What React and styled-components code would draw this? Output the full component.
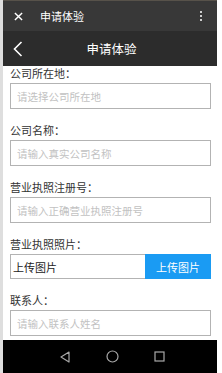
import React from "react";
import styled, { createGlobalStyle } from "styled-components";

const GlobalStyle = createGlobalStyle`
  html, body {
    margin: 0;
    padding: 0;
    background: #ffffff;
    font-family: "Noto Sans CJK SC", "Noto Sans", sans-serif;
  }
`;

const fields = [
  { label: "公司所在地：", placeholder: "请选择公司所在地" },
  { label: "公司名称：", placeholder: "请输入真实公司名称" },
  { label: "营业执照注册号：", placeholder: "请输入正确营业执照注册号" },
  { label: "营业执照照片：", upload: true },
  { label: "联系人：", placeholder: "请输入联系人姓名" },
];

export default function App() {
  return (
    <Page>
      <GlobalStyle />
      <Phone>
        <TopBar>
          <CloseIcon viewBox="0 0 10 10">
            <path d="M1 1 L9 9 M9 1 L1 9" />
          </CloseIcon>
          <TopTitle>申请体验</TopTitle>
          <Dots>
            <span />
            <span />
            <span />
          </Dots>
        </TopBar>
        <NavBar>
          <BackIcon viewBox="0 0 10 16">
            <path d="M8.5 1 L1.5 8 L8.5 15" />
          </BackIcon>
          <NavTitle>申请体验</NavTitle>
        </NavBar>
        <Content>
          {fields.map((f) => (
            <Field key={f.label}>
              <Label>{f.label}</Label>
              {f.upload ? (
                <UploadRow>
                  <UploadText>上传图片</UploadText>
                  <UploadButton>上传图片</UploadButton>
                </UploadRow>
              ) : (
                <Input placeholder={f.placeholder} />
              )}
            </Field>
          ))}
        </Content>
        <SystemBar>
          <svg width="12" height="12" viewBox="0 0 12 12">
            <path d="M10 1 L2 6 L10 11 Z" fill="none" stroke="#a8a8a8" strokeWidth="1.2" strokeLinejoin="round" />
          </svg>
          <svg width="13" height="13" viewBox="0 0 13 13">
            <circle cx="6.5" cy="6.5" r="5.5" fill="none" stroke="#a8a8a8" strokeWidth="1.2" />
          </svg>
          <svg width="11" height="11" viewBox="0 0 11 11">
            <rect x="1" y="1" width="9" height="9" fill="none" stroke="#a8a8a8" strokeWidth="1.2" />
          </svg>
        </SystemBar>
      </Phone>
    </Page>
  );
}

const Page = styled.div`
  width: 222px;
  height: 373px;
  display: flex;
  border-left: 3px solid #dedede;
  box-sizing: border-box;
  background: #ffffff;
`;

const Phone = styled.div`
  width: 214px;
  height: 373px;
  display: flex;
  flex-direction: column;
  background: #ffffff;
  overflow: hidden;
`;

const TopBar = styled.div`
  height: 31px;
  flex-shrink: 0;
  display: flex;
  align-items: center;
  padding: 0 0 0 11px;
  background: #383838;
  border-top: 1px solid #57524a;
  box-sizing: border-box;
`;

const CloseIcon = styled.svg`
  width: 9px;
  height: 9px;
  fill: none;
  stroke: #ffffff;
  stroke-width: 1.6;
  margin-right: 17px;
`;

const TopTitle = styled.div`
  flex: 1;
  color: #ffffff;
  font-size: 11px;
  line-height: 14px;
`;

const Dots = styled.div`
  width: 22px;
  display: flex;
  flex-direction: column;
  align-items: center;
  gap: 2px;
  margin-right: 5px;

  span {
    width: 2px;
    height: 2px;
    background: #ffffff;
    border-radius: 1px;
  }
`;

const NavBar = styled.div`
  height: 35px;
  flex-shrink: 0;
  display: flex;
  align-items: center;
  padding-left: 10px;
  background: #2c2c2c;
`;

const BackIcon = styled.svg`
  width: 10px;
  height: 16px;
  fill: none;
  stroke: #ffffff;
  stroke-width: 1.6;
`;

const NavTitle = styled.div`
  flex: 1;
  text-align: center;
  color: #ffffff;
  font-size: 12.5px;
  line-height: 16px;
  margin-right: 17px;
`;

const Content = styled.div`
  flex: 1;
  overflow: hidden;
  padding: 0 6px 0 7px;
`;

const Field = styled.div`
  display: flex;
  flex-direction: column;
  margin-bottom: 14px;
`;

const Label = styled.div`
  font-size: 11px;
  line-height: 14px;
  color: #333333;
  margin-bottom: 3px;
`;

const Input = styled.input`
  height: 26px;
  box-sizing: border-box;
  width: 100%;
  border: 1px solid #b3b3b3;
  border-radius: 0;
  padding: 0 6px;
  font-family: "Noto Sans CJK SC", "Noto Sans", sans-serif;
  font-size: 10.5px;
  color: #333333;
  outline: none;
  background: #ffffff;

  &::placeholder {
    color: #c2c2c2;
  }
`;

const UploadRow = styled.div`
  display: flex;
  height: 25px;
`;

const UploadText = styled.div`
  flex: 1;
  display: flex;
  align-items: center;
  padding-left: 2px;
  border: 1px solid #b3b3b3;
  border-right: none;
  font-size: 11px;
  color: #222222;
`;

const UploadButton = styled.div`
  width: 66px;
  display: flex;
  align-items: center;
  justify-content: center;
  background: #1a9bf3;
  color: #ffffff;
  font-size: 11px;
`;

const SystemBar = styled.div`
  height: 33px;
  flex-shrink: 0;
  background: #000000;
  display: flex;
  align-items: center;
  justify-content: center;
  gap: 35px;
  padding-left: 4px;
`;
